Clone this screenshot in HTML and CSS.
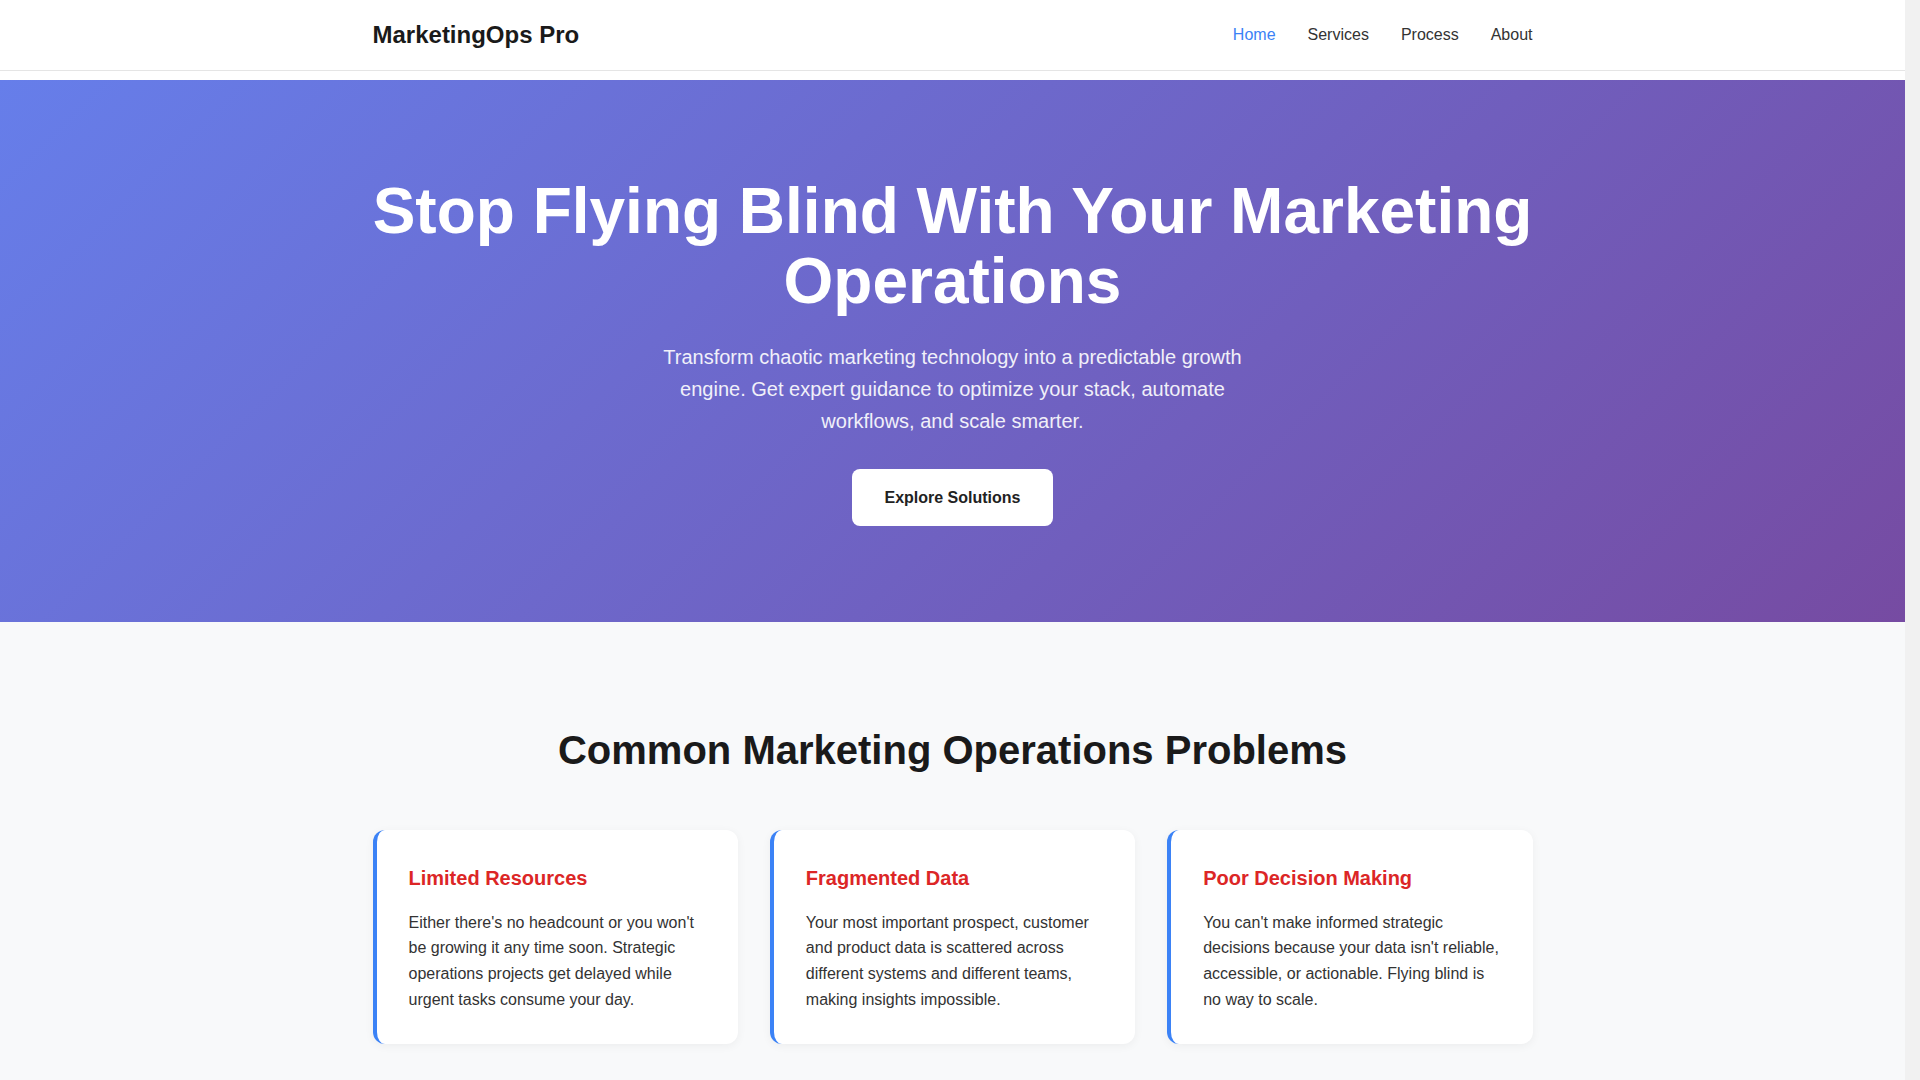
FILE: index.html
```html
<!DOCTYPE html>
<html lang="en">
<head>
<meta charset="utf-8">
<title>MarketingOps Pro</title>
<link rel="stylesheet" href="styles.css">
</head>
<body>
<header class="site-header">
  <div class="container header-inner">
    <div class="logo">MarketingOps Pro</div>
    <nav class="nav">
      <a href="#" class="nav-link active">Home</a>
      <a href="#" class="nav-link">Services</a>
      <a href="#" class="nav-link">Process</a>
      <a href="#" class="nav-link">About</a>
    </nav>
  </div>
</header>
<main>
  <section class="hero">
    <div class="container hero-inner">
      <h1 class="hero-title">Stop Flying Blind With Your Marketing Operations</h1>
      <p class="hero-sub">Transform chaotic marketing technology into a predictable growth engine. Get expert guidance to optimize your stack, automate workflows, and scale smarter.</p>
      <a href="#" class="btn">Explore Solutions</a>
    </div>
  </section>
  <section class="problems">
    <div class="container">
      <h2 class="section-title">Common Marketing Operations Problems</h2>
      <div class="cards">
        <div class="card">
          <h3 class="card-title">Limited Resources</h3>
          <p class="card-text">Either there's no headcount or you won't be growing it any time soon. Strategic operations projects get delayed while urgent tasks consume your day.</p>
        </div>
        <div class="card">
          <h3 class="card-title">Fragmented Data</h3>
          <p class="card-text">Your most important prospect, customer and product data is scattered across different systems and different teams, making insights impossible.</p>
        </div>
        <div class="card">
          <h3 class="card-title">Poor Decision Making</h3>
          <p class="card-text">You can't make informed strategic decisions because your data isn't reliable, accessible, or actionable. Flying blind is no way to scale.</p>
        </div>
      </div>
    </div>
  </section>
</main>
</body>
</html>
```
FILE: styles.css
```css
* { box-sizing: border-box; }
html {
  margin: 0;
  padding: 0;
  background: #f1f1f1;
}
body {
  margin: 0 15px 0 0;
  padding: 0;
  font-family: "Liberation Sans", Arial, sans-serif;
  line-height: 1.6;
  color: #333;
  background: #fff;
}
.container {
  max-width: 1200px;
  margin: 0 auto;
  padding: 0 20px;
}
.site-header {
  background: #fff;
  border-bottom: 1px solid #e5e5e5;
  height: 71px;
  margin-bottom: 9px;
}
.header-inner {
  height: 70px;
  display: flex;
  align-items: center;
  justify-content: space-between;
}
.logo {
  font-size: 24px;
  font-weight: 700;
  color: #1a1a1a;
}
.nav {
  display: flex;
  gap: 32px;
}
.nav-link {
  font-size: 16px;
  color: #333;
  text-decoration: none;
}
.nav-link.active { color: #3b82f6; }

.hero {
  background: linear-gradient(135deg, #667eea 0%, #764ba2 100%);
  color: #fff;
  padding: 96px 0 96px;
}
.hero-inner {
  display: flex;
  flex-direction: column;
  align-items: center;
  text-align: center;
}
.hero-title {
  font-size: 64px;
  line-height: 1.1;
  font-weight: 700;
  margin: 0 0 24px;
}
.hero-sub {
  font-size: 20px;
  line-height: 1.6;
  max-width: 600px;
  margin: 0 0 32px;
  opacity: 0.9;
}
.btn {
  display: inline-block;
  background: #fff;
  color: #222;
  font-weight: 700;
  font-size: 16px;
  line-height: 25px;
  padding: 16px 32px;
  border-radius: 8px;
  text-decoration: none;
}

.problems {
  background: #f8f9fa;
  padding: 96px 0;
}
.section-title {
  font-size: 40px;
  line-height: 1.6;
  font-weight: 700;
  text-align: center;
  color: #1a1a1a;
  margin: 0 0 48px;
}
.cards {
  display: grid;
  grid-template-columns: repeat(3, 1fr);
  gap: 32px;
}
.card {
  background: #fff;
  border-left: 4px solid #3b82f6;
  border-radius: 12px;
  padding: 32px;
  box-shadow: 0 2px 10px rgba(0, 0, 0, 0.05);
}
.card-title {
  font-size: 20px;
  line-height: 1.6;
  font-weight: 700;
  color: #dc2626;
  margin: 0 0 16px;
}
.card-text {
  font-size: 16px;
  line-height: 1.6;
  color: #333;
  margin: 0;
}
```
